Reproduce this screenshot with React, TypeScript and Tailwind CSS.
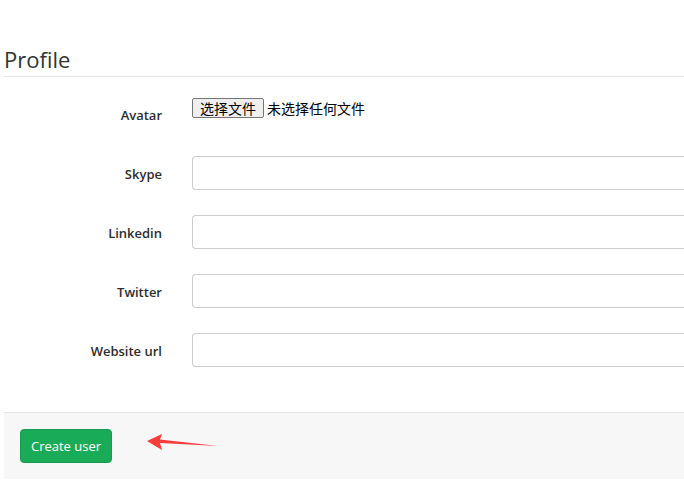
import React from "react";

const rows = ["Skype", "Linkedin", "Twitter", "Website url"];

export default function App() {
  return (
    <div className="w-[684px] h-[502px] bg-white overflow-hidden text-[#333]" style={{ fontFamily: '"Open Sans", "Noto Sans CJK SC", sans-serif' }}>
      <div className="pl-1 pt-[45px]">
        <h2 className="text-[22px] leading-[28px] font-normal text-[#333] pb-[3px] border-b border-[#e5e5e5]">Profile</h2>
        <div className="mt-[21px]">
          <div className="flex h-[58px]">
            <label className="w-[158px] text-right text-[13px] font-semibold pt-[7px] leading-[20px] text-[#2d2d2d]">Avatar</label>
            <div className="pl-[30px] flex items-start">
              <div className="flex items-center text-[14px] leading-[20px]" style={{ fontFamily: '"Noto Sans CJK SC", sans-serif' }}>
                <span className="h-[20px] px-[7px] border border-[#767676] rounded-[2px] bg-[#efefef] text-black flex items-center text-[14px]">选择文件</span>
                <span className="ml-[3px] text-black">未选择任何文件</span>
              </div>
            </div>
          </div>
          {rows.map((r) => (
            <div key={r} className="flex h-[59px]">
              <label className="w-[158px] text-right text-[13px] font-semibold pt-[8px] leading-[20px] text-[#2d2d2d]">{r}</label>
              <div className="pl-[30px] flex-1">
                <div className="h-[34px] border border-[#ccc] rounded-l-[4px] border-r-0 bg-white" />
              </div>
            </div>
          ))}
        </div>
        <div className="mt-[20px] bg-[#f7f7f7] border-t border-[#e5e5e5] pt-[16px] pb-[16px] pl-[16px] flex items-center">
          <button className="h-[34px] w-[92px] rounded-[4px] bg-[#1aab58] border border-[#179a4e] text-white text-[13px] leading-[20px]">Create user</button>
          <svg width="80" height="20" viewBox="0 0 80 20" className="ml-[33px] -mt-[6px]">
            <path d="M2 8 L17 1 L15 6.5 L73 13 L15 10 L17 17 Z" fill="#f73c3c" />
          </svg>
        </div>
      </div>
    </div>
  );
}
